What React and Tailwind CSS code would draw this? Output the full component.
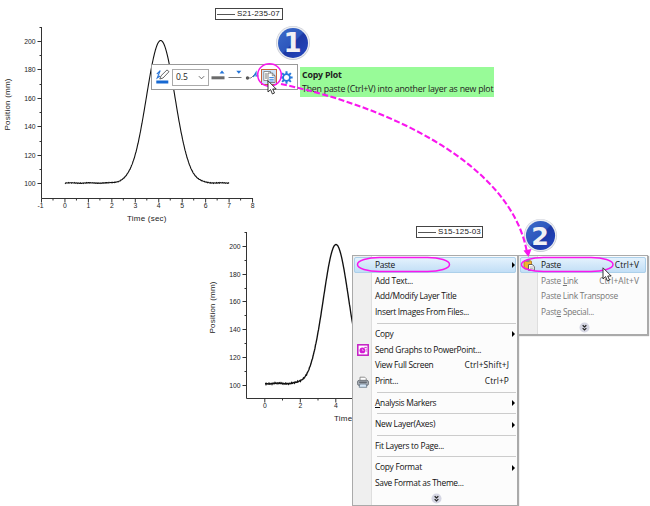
import React from 'react';

const UI = "font-['Open_Sans','Noto_Sans',sans-serif]";

function curve({ x0, x1, peak, sigma, base, top, noise }) {
  const pts = [];
  for (let x = x0; x <= x1; x += 0.5) {
    const g = Math.exp(-((x - peak) ** 2) / (2 * sigma * sigma));
    const n = (Math.sin(x * 12.9) + Math.sin(x * 7.3 + 1) + Math.sin(x * 3.1)) * noise * (1 - g);
    pts.push(`${x.toFixed(1)},${(base - (base - top) * g + n).toFixed(2)}`);
  }
  return pts.join(' ');
}

function Plot({ axisX, axisTop, axisY, axisRight, yTicks, xTicks, yMinor, xMinor, points, stroke, yTitle, xTitle }) {
  return (
    <g>
      <g stroke="#333" strokeWidth="1">
        <path d={`M${axisX} ${axisTop}V${axisY}H${axisRight}`} fill="none" />
        {yTicks.map(([v, y]) => <path key={v} d={`M${axisX} ${y}h-4`} />)}
        {yMinor.map((y) => <path key={y} d={`M${axisX} ${y}h-2`} />)}
        {xTicks.map(([v, x]) => <path key={v} d={`M${x} ${axisY}v4`} />)}
        {xMinor.map((x) => <path key={x} d={`M${x} ${axisY}v2`} />)}
      </g>
      <g fill="#222" fontFamily="Liberation Sans, Arial, sans-serif" fontSize="6.8">
        {yTicks.map(([v, y]) => <text key={v} x={axisX - 6} y={y + 2.3} textAnchor="end">{v}</text>)}
        {xTicks.map(([v, x]) => <text key={v} x={x - (v < 0 ? 1 : 0)} y={axisY + 9.6} textAnchor="middle">{v}</text>)}
        <text fontSize="8" textLength="52" textAnchor="middle" transform={`translate(${yTitle[0]} ${yTitle[1]}) rotate(-90)`}>Position (mm)</text>
        <text fontSize="8" x={xTitle[0]} y={xTitle[1]} textLength="39.5">Time (sec)</text>
      </g>
      <polyline points={points} fill="none" stroke="#111" strokeWidth={stroke} />
    </g>
  );
}

function Legend({ children }) {
  return (
    <div className="flex h-full w-full items-center border border-[#444] bg-white pl-px">
      <span className="h-px w-[18px] shrink-0 bg-[#555]" />
      <span className="ml-[2px] whitespace-nowrap font-['Liberation_Sans',sans-serif] text-[8px] leading-none tracking-[0.1px] text-[#222]">{children}</span>
    </div>
  );
}

function Badge({ n }) {
  return (
    <svg viewBox="0 0 36 36" className="h-full w-full">
      <defs>
        <linearGradient id={`badge${n}`} x1="0" y1="0" x2="1" y2="1">
          <stop offset="0" stopColor="#3d6bc9" />
          <stop offset="0.48" stopColor="#2d57bd" />
          <stop offset="0.52" stopColor="#1d38a5" />
          <stop offset="1" stopColor="#2348c2" />
        </linearGradient>
      </defs>
      <circle cx="18" cy="18" r="17" fill="#c9ccd5" />
      <circle cx="18" cy="17.7" r="16.3" fill="#eceef2" />
      <circle cx="18" cy="18" r="15" fill={`url(#badge${n})`} />
      <text x="17.6" y="27.3" textAnchor="middle" fontFamily="DejaVu Sans, Verdana, sans-serif" fontWeight="bold" fontSize="26" fill="#f1f1f4">{n}</text>
    </svg>
  );
}

function Cursor() {
  return (
    <svg viewBox="0 0 10 15" className="h-full w-full">
      <path d="M1 .8V12L3.6 9.6L5.4 14L7.5 13L5.7 9H9.2Z" fill="#fff" stroke="#222" strokeWidth="0.9" />
    </svg>
  );
}

function Toolbar() {
  return (
    <div className="flex h-full w-full items-center border border-[#999] bg-white">
      <svg viewBox="0 0 14 16" className="ml-[4px] h-[16px] w-[14px] shrink-0">
        <rect x="0.3" y="11.5" width="12" height="3" fill="#1769d2" />
        <path d="M.8 5.2L4.2 1.6L1.2 9L4 7" fill="none" stroke="#2874d7" strokeWidth="1.1" />
        <path d="M3.8 10L5 6.8L11 .9L13 2.7L7 9Z" fill="#fff" stroke="#555" strokeWidth="0.9" />
      </svg>
      <div className="ml-[2px] flex h-[17px] w-[37px] shrink-0 items-center justify-between border border-[#aaa] pl-[3px] pr-[3px]">
        <span className={`${UI} text-[8.5px] leading-none text-[#222]`}>0.5</span>
        <svg viewBox="0 0 8 5" className="h-[5px] w-[7px]"><path d="M1 1L4 4L7 1" fill="none" stroke="#555" /></svg>
      </div>
      <svg viewBox="0 0 68 22" className="ml-[2px] h-[22px] w-[68px] shrink-0">
        <rect x="0.5" y="10.3" width="13" height="3" fill="#6b6b6b" />
        <path d="M8.5 7.5L11 4.5L13.5 7.5Z" fill="#2474d8" />
        <path d="M17.5 11.5H30.5" stroke="#777" />
        <path d="M25.3 4.8H30.3L27.8 7.8Z" fill="#2474d8" />
        <circle cx="36.5" cy="12" r="1.7" fill="#555" />
        <path d="M36.5 12H40L43.5 8.5" fill="none" stroke="#666" strokeWidth="0.8" />
        <path d="M42.3 11L45 6.5V10H47.5" fill="none" stroke="#2474d8" strokeWidth="1.2" />
        <rect x="50.5" y="3.5" width="15" height="15" fill="#cfe4fa" stroke="#c9623a" />
        <path d="M52.8 5.5H59.5V14.5H52.8Z" fill="#fff" stroke="#777" strokeWidth="0.8" />
        <path d="M54 8h2M54 10h2M54 12h2" stroke="#555" strokeWidth="0.8" />
        <path d="M57 7H61.3L64 9.7V16.5H57Z" fill="#fff" stroke="#666" strokeWidth="0.8" />
        <path d="M61.3 7V9.7H64" fill="none" stroke="#666" strokeWidth="0.7" />
        <path d="M58.3 11.5h4.5M58.3 13.3h4.5M58.3 15h4.5" stroke="#2c7cde" strokeWidth="0.9" />
      </svg>
      <svg viewBox="0 0 14 14" className="ml-px h-[13px] w-[13px] shrink-0">
        <g stroke="#2779dc" strokeWidth="2.2"><path d="M7 .4V13.6M.4 7H13.6M2.3 2.3L11.7 11.7M2.3 11.7L11.7 2.3" /></g>
        <circle cx="7" cy="7" r="3.7" fill="#fff" stroke="#2779dc" strokeWidth="2" />
      </svg>
    </div>
  );
}

function PowerPointIcon() {
  return (
    <svg viewBox="0 0 12 12" className="h-[12px] w-[12px] shrink-0">
      <rect x="0.8" y="0.8" width="10.4" height="10.4" fill="#fff" stroke="#c41bc4" strokeWidth="1.5" />
      <circle cx="5.4" cy="6.4" r="2.9" fill="#d41bd4" />
      <path d="M7.3 3.4H9.8M8.8 5.2H9.8M8.8 7H9.8" stroke="#c41bc4" strokeWidth="0.9" />
      <path d="M5.4 5V6.4H6.8" fill="none" stroke="#fff" strokeWidth="0.5" />
    </svg>
  );
}

function PrinterIcon() {
  return (
    <svg viewBox="0 0 12 12" className="h-[12px] w-[12px] shrink-0">
      <path d="M3 5V1.2H7.8L9.2 2.6V5Z" fill="#fff" stroke="#777" strokeWidth="0.8" />
      <rect x="0.5" y="4.3" width="11" height="5.2" rx="1.8" fill="#a7adb5" stroke="#5d636b" strokeWidth="0.8" />
      <path d="M2.2 6.2H9.8" stroke="#444b53" />
      <path d="M2.8 8H9.2L9.8 11.3H2.2Z" fill="#d5e6f7" stroke="#667686" strokeWidth="0.8" />
    </svg>
  );
}

function PasteIcon() {
  return (
    <svg viewBox="0 0 12 12" className="h-[12px] w-[12px] shrink-0">
      <rect x="1" y="1.8" width="7.5" height="8.2" rx="1" fill="#efb52e" stroke="#a76d18" strokeWidth="0.8" />
      <rect x="3" y="0.7" width="3.5" height="2.2" rx="0.6" fill="#888" />
      <path d="M5.5 5.5H9.2L11.3 7.5V11.3H5.5Z" fill="#fff" stroke="#555" strokeWidth="0.9" />
      <path d="M6.8 8H10M6.8 9.6H10" stroke="#888" strokeWidth="0.6" />
    </svg>
  );
}

function More() {
  return (
    <svg viewBox="0 0 12 12" className="h-[11px] w-[11px]">
      <circle cx="6" cy="6" r="5.5" fill="#d5d6e3" />
      <path d="M4 3.5L6 5.4L8 3.5M4 6.7L6 8.6L8 6.7" fill="none" stroke="#222" strokeWidth="1.3" />
    </svg>
  );
}

function Row({ label, shortcut, arrow, icon, active, muted }) {
  return (
    <div
      className={`flex h-[15.85px] shrink-0 items-center ${active ? 'rounded-[2px] bg-gradient-to-b from-[#e6f3fd] to-[#bfddf5] outline outline-1 -outline-offset-1 outline-[#acd0ea]' : ''} ${muted ? 'text-[#777]' : 'text-[#111]'}`}
    >
      <span className="flex w-[21px] shrink-0 pl-[2.5px]">{icon}</span>
      <span className="flex-1 whitespace-nowrap leading-none">{label}</span>
      {shortcut && <span className="mr-[7px] whitespace-nowrap leading-none tracking-[0.1px]">{shortcut}</span>}
      {arrow && <span className="mr-px h-0 w-0 border-y-[3px] border-l-[3.5px] border-y-transparent border-l-black" />}
    </div>
  );
}

function Separator() {
  return (
    <div className="flex h-[5.7px] shrink-0 items-center pl-[23px]">
      <span className="h-px w-full bg-[#ccc]" />
    </div>
  );
}

function Menu({ children }) {
  return (
    <div className={`${UI} flex h-full w-full flex-col border border-[#aaa] bg-[linear-gradient(90deg,#efefef_18px,#dedede_18px,#dedede_19px,#fcfcfc_19px)] px-px pt-px text-[8.4px] font-medium tracking-[-0.28px] shadow-[1px_1px_1px_#aaa]`}>
      {children}
    </div>
  );
}

export default function App() {
  const first = curve({ x0: 65, x1: 229, peak: 160.7, sigma: 14.2, base: 183, top: 40.5, noise: 0.2 });
  const second = curve({ x0: 265, x1: 360, peak: 336, sigma: 12.7, base: 383.5, top: 244.5, noise: 0.35 });
  return (
    <main className="relative h-[506px] w-[650px] overflow-hidden bg-white">
      <svg viewBox="0 0 650 506" className="absolute inset-0 h-[506px] w-[650px]">
        <Plot
          axisX={41.5} axisTop={27} axisY={198.5} axisRight={253}
          yTicks={[[200, 41.5], [180, 69.5], [160, 98.5], [140, 126.5], [120, 155.5], [100, 183.5]]}
          yMinor={[27.5, 55.5, 84.5, 112.5, 141.5, 169.5]}
          xTicks={[-1, 0, 1, 2, 3, 4, 5, 6, 7, 8].map((v, i) => [v, 41.5 + i * 23.45])}
          xMinor={[0, 1, 2, 3, 4, 5, 6, 7, 8].map((i) => 53 + i * 23.45)}
          points={first} stroke={1.1} yTitle={[9.5, 104.5]} xTitle={[127, 221]}
        />
        <Plot
          axisX={246.5} axisTop={232} axisY={398.5} axisRight={360}
          yTicks={[[200, 246.5], [180, 274.5], [160, 301.5], [140, 329.5], [120, 357.5], [100, 385.5]]}
          yMinor={[232.5, 260.5, 288.5, 315.5, 343.5, 371.5]}
          xTicks={[[0, 264.8], [2, 300.3], [4, 335.8]]}
          xMinor={[282.5, 318]}
          points={second} stroke={1.35} yTitle={[215, 307.5]} xTitle={[334, 421.3]}
        />
      </svg>

      <div className="absolute left-[215px] top-[8px] h-[12px] w-[68px]"><Legend>S21-235-07</Legend></div>
      <div className="absolute left-[416px] top-[226px] h-[12px] w-[67px]"><Legend>S15-125-03</Legend></div>

      <div className="absolute left-[151px] top-[64px] h-[26px] w-[147px]"><Toolbar /></div>
      <div className={`${UI} absolute left-[300px] top-[67px] flex h-[30px] w-[194px] flex-col bg-[#98fb98] pl-[2px] pt-[3px] text-[#222]`}>
        <b className="whitespace-nowrap text-[8.8px] leading-[11px] tracking-[-0.2px]">Copy Plot</b>
        <span className="mt-[3px] whitespace-nowrap text-[8.8px] leading-[11px] tracking-[-0.22px]">Then paste (Ctrl+V) into another layer as new plot</span>
      </div>

      <div className="absolute left-[352px] top-[255px] h-[251px] w-[166px]">
        <Menu>
          <Row label="Paste" arrow active />
          <Row label="Add Text..." />
          <Row label="Add/Modify Layer Title" />
          <Row label="Insert Images From Files..." />
          <Separator />
          <Row label="Copy" arrow />
          <Row label="Send Graphs to PowerPoint..." icon={<PowerPointIcon />} />
          <Row label="View Full Screen" shortcut="Ctrl+Shift+J" />
          <Row label="Print..." shortcut="Ctrl+P" icon={<PrinterIcon />} />
          <Separator />
          <Row label={<><u>A</u>nalysis Markers</>} arrow />
          <Separator />
          <Row label="New Layer(Axes)" arrow />
          <Separator />
          <Row label="Fit Layers to Page..." />
          <Separator />
          <Row label="Copy Format" arrow />
          <Row label="Save Format as Theme..." />
          <div className="flex justify-center pt-[2px] pl-[3px]"><More /></div>
        </Menu>
      </div>
      <div className="absolute left-[518px] top-[255px] h-[80px] w-[130px]">
        <Menu>
          <Row label="Paste" shortcut="Ctrl+V" icon={<PasteIcon />} active />
          <Row label={<>Paste <u>L</u>ink</>} shortcut="Ctrl+Alt+V" muted />
          <Row label="Paste Link Transpose" muted />
          <Row label={<>Past<u>e</u> Special...</>} muted />
          <div className="flex justify-center pt-[2px] pl-[3px]"><More /></div>
        </Menu>
      </div>

      <div className="absolute left-[275px] top-[25px] h-[36px] w-[36px]"><Badge n={1} /></div>
      <div className="absolute left-[523px] top-[218px] h-[35px] w-[35px]"><Badge n={2} /></div>

      <svg viewBox="0 0 650 506" className="absolute inset-0 h-[506px] w-[650px]">
        <g fill="none" stroke="#f916ee" strokeWidth="1.5">
          <ellipse cx="269.5" cy="75" rx="11.8" ry="11.2" />
          <rect x="357.5" y="257.5" width="92" height="14" rx="22" ry="7" />
          <rect x="521.5" y="257.5" width="91.5" height="14" rx="22" ry="7" />
          <path d="M281 84C395 108 510 166 526.5 250" strokeWidth="2.1" strokeDasharray="6 2.5" />
        </g>
        <path d="M523.5 250.5L531.5 249L528.5 257Z" fill="#f916ee" />
      </svg>
      <div className="absolute left-[267px] top-[80px] h-[15px] w-[10px]"><Cursor /></div>
      <div className="absolute left-[602px] top-[267px] h-[15px] w-[10px]"><Cursor /></div>
    </main>
  );
}
